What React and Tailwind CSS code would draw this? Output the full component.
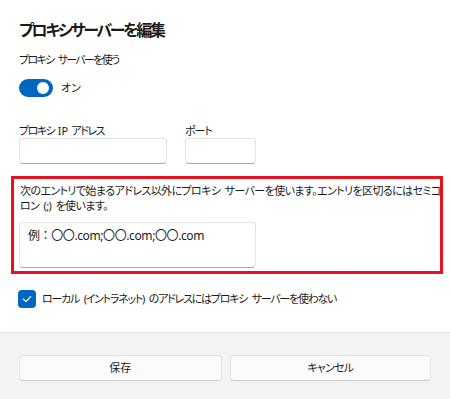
import React from "react";

const font = "font-['Noto_Sans','Noto_Sans_CJK_JP',sans-serif]";
const palt = "[font-feature-settings:'palt']";

export default function App() {
  return (
    <div className={`w-[450px] h-[399px] bg-white flex flex-col overflow-hidden text-[#1b1b1b] ${font}`}>
      <div className="flex flex-col px-[19px] pt-[16px] h-[332px]">
        <h1 className={`text-[16px] leading-[28px] font-bold tracking-[-2.3px] ${palt}`}>プロキシサーバーを編集</h1>
        <div className={`mt-[7px] text-[11px] leading-[18px] tracking-[-1.7px] [word-spacing:3px] ${palt}`}>プロキシ サーバーを使う</div>
        <div className="mt-[10px] flex items-center h-[18px]">
          <div className="w-[34px] h-[18px] rounded-full bg-[#0067c0] flex items-center justify-end pr-[4px]">
            <div className="w-[12px] h-[12px] rounded-full bg-white" />
          </div>
          <span className={`ml-[8px] text-[11px] leading-[18px] ${palt}`}>オン</span>
        </div>
        <div className="mt-[27px] flex gap-[18px]">
          <div className="flex flex-col w-[148px]">
            <div className={`text-[11px] leading-[14px] tracking-[-1.5px] [word-spacing:2px] ${palt}`}>
              プロキシ <span className="tracking-[0px]">IP</span> アドレス
            </div>
            <div className="h-[26px] rounded-[4px] border border-[#e3e3e3] border-b-[#a8a8a8] bg-white" />
          </div>
          <div className="flex flex-col w-[71px]">
            <div className={`text-[11px] leading-[14px] tracking-[-1px] ${palt}`}>ポート</div>
            <div className="h-[26px] rounded-[4px] border border-[#e3e3e3] border-b-[#a8a8a8] bg-white" />
          </div>
        </div>
        <div className="mt-[12px] ml-[-8px] w-[432px] h-[98px] border-[3px] border-[#e8111f] pl-[6px] pr-[2px] pt-[4px]">
          <p className={`text-[11px] leading-[15px] tracking-[-0.6px] [word-spacing:2px] whitespace-nowrap ${palt}`}>
            次のエントリで始まるアドレス以外にプロキシ サーバーを使います。エントリを区切るにはセミコ
            <br />
            ロン (;) を使います。
          </p>
          <div className="mt-[9px] ml-[-1px] w-[237px] h-[46px] rounded-[4px] border border-[#e3e3e3] border-b-[#a8a8a8] bg-white pl-[8px] pt-[4px] text-[12px] leading-[18px] tracking-[-0.4px]">
            例：〇〇.com;〇〇.com;〇〇.com
          </div>
        </div>
        <div className="mt-[16px] flex items-center">
          <div className="ml-[-1px] w-[18px] h-[18px] rounded-[4px] bg-[#0067c0] flex items-center justify-center">
            <svg width="12" height="12" viewBox="0 0 12 12" fill="none">
              <path d="M2.5 6.2 L5 8.6 L9.6 3.6" stroke="white" strokeWidth="1.3" strokeLinecap="round" strokeLinejoin="round" />
            </svg>
          </div>
          <span className={`ml-[6px] text-[11px] leading-[18px] tracking-[-1.25px] [word-spacing:3px] whitespace-nowrap ${palt}`}>ローカル (イントラネット) のアドレスにはプロキシ サーバーを使わない</span>
        </div>
      </div>
      <div className="flex-1 bg-[#f3f3f3] border-t border-[#e5e5e5] px-[19px] pt-[22px] flex gap-[8px]">
        <button className={`w-[203px] h-[26px] rounded-[4px] bg-[#fbfbfb] border border-[#e5e5e5] border-b-[#cccccc] text-[11px] leading-[18px] ${palt}`}>保存</button>
        <button className={`w-[202px] h-[26px] rounded-[4px] bg-[#fbfbfb] border border-[#e5e5e5] border-b-[#cccccc] text-[11px] leading-[18px] tracking-[-0.8px] ${palt}`}>キャンセル</button>
      </div>
    </div>
  );
}
